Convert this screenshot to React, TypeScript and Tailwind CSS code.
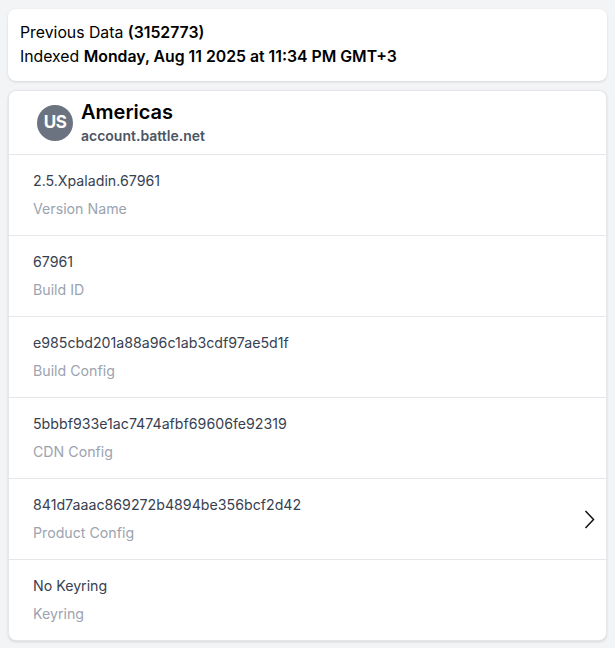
import React from "react";

const rows: { value: string; label: string; chevron?: boolean }[] = [
  { value: "2.5.Xpaladin.67961", label: "Version Name" },
  { value: "67961", label: "Build ID" },
  { value: "e985cbd201a88a96c1ab3cdf97ae5d1f", label: "Build Config" },
  { value: "5bbbf933e1ac7474afbf69606fe92319", label: "CDN Config" },
  { value: "841d7aaac869272b4894be356bcf2d42", label: "Product Config", chevron: true },
  { value: "No Keyring", label: "Keyring" },
];

export default function App() {
  return (
    <div
      className="min-h-[648px] w-[615px] bg-[#f3f4f6] px-2 pt-[9px] pb-2 flex flex-col gap-[9px]"
      style={{ fontFamily: "Inter, 'Noto Sans', sans-serif" }}
    >
      <div className="bg-white rounded-lg shadow-sm px-3 py-3 text-[15.8px] leading-6 text-black">
        <div>
          Previous Data <span className="font-semibold">(3152773)</span>
        </div>
        <div>
          Indexed <span className="font-semibold">Monday, Aug 11 2025 at 11:34 PM GMT+3</span>
        </div>
      </div>
      <div className="bg-white rounded-lg shadow-sm border border-[#e5e7eb]">
        <div className="h-[64px] flex items-center pl-[28px] gap-2 border-b border-[#e5e7eb]">
          <div className="w-9 h-9 rounded-full bg-[#6b7280] text-white flex items-center justify-center font-bold text-[17px] tracking-tight">
            US
          </div>
          <div className="flex flex-col gap-[2px]">
            <div className="text-[20px] leading-6 font-semibold text-black">Americas</div>
            <div className="text-[14px] leading-5 font-semibold text-[#4b5563]">account.battle.net</div>
          </div>
        </div>
        {rows.map((r, i) => (
          <div
            key={r.label}
            className={`flex items-center justify-between pl-6 pr-[11px] py-4 ${i < rows.length - 1 ? "border-b border-[#e5e7eb]" : ""}`}
          >
            <div className="flex flex-col gap-2 text-[14.2px] leading-5">
              <div className="text-[#374151]">{r.value}</div>
              <div className="text-[#9ca3af]">{r.label}</div>
            </div>
            {r.chevron && (
              <svg width="11" height="19" viewBox="0 0 11 19" fill="none" stroke="#111" strokeWidth="1.5">
                <path d="M1.5 1 L9.5 9.5 L1.5 18" />
              </svg>
            )}
          </div>
        ))}
      </div>
    </div>
  );
}
